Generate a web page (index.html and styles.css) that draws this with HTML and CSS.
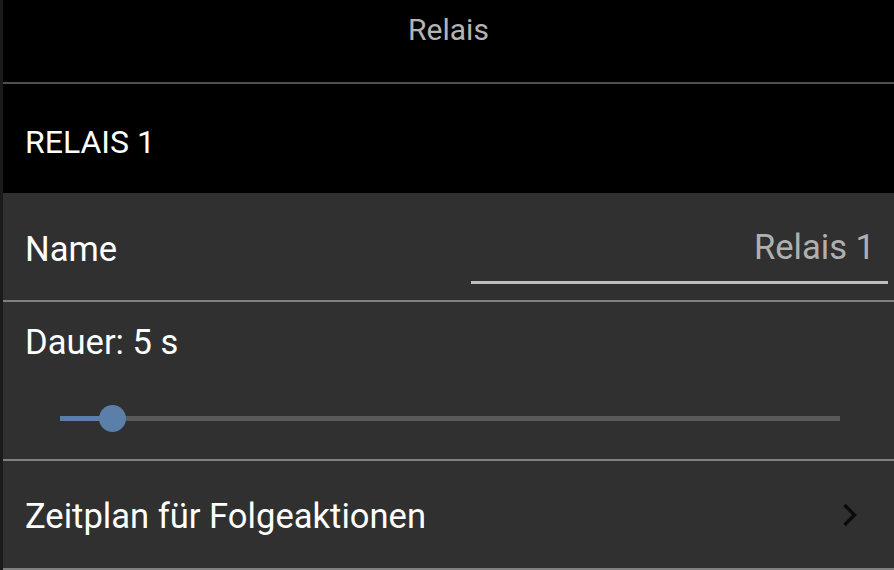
FILE: index.html
```html
<!DOCTYPE html>
<html lang="de">
<head>
  <meta charset="UTF-8" />
  <meta name="viewport" content="width=device-width, initial-scale=1.0"/>
  <title>Relais</title>
  <link rel="stylesheet" href="styles.css">
</head>
<body>
  <div class="app">
    <div class="titlebar">Relais</div>
    <div class="section">RELAIS 1</div>
    <div class="row row-name">
      <span class="label">Name</span>
      <div class="field"><span class="value">Relais 1</span></div>
    </div>
    <div class="row row-slider">
      <span class="label">Dauer: 5 s</span>
      <div class="slider">
        <div class="track">
          <div class="fill" style="width: 6.7%"></div>
          <div class="thumb"></div>
        </div>
      </div>
    </div>
    <div class="row row-link">
      <span class="label">Zeitplan für Folgeaktionen</span>
      <svg class="chevron" width="16" height="24" viewBox="0 0 16 24">
        <polyline points="2.5,2 12.5,12 2.5,22" fill="none" stroke="#0b0b0b" stroke-width="3.4"/>
      </svg>
    </div>
  </div>
</body>
</html>
```

FILE: styles.css
```css
body { margin: 0; background: #303030; font-family: Roboto, "Liberation Sans", sans-serif; }
.app { border-left: 3px solid #1b1b1b; min-height: 570px; box-sizing: border-box; }
.titlebar { background: #000; color: #b4b4b4; height: 82px; text-align: center; font-size: 30px; line-height: 60px; border-bottom: 2px solid #505050; }
.section { background: #000; color: #fff; height: 109px; display: flex; align-items: center; padding-left: 22px; font-size: 32px; padding-top: 6px; box-sizing: border-box; }
.row { display: flex; color: #fff; font-size: 34.6px; border-bottom: 2px solid #808080; padding-left: 22px; box-sizing: border-box; }
.row-name { height: 109px; align-items: center; justify-content: space-between; }
.row-name .label { padding-top: 4px; }
.field { width: 417px; margin-right: 6px; align-self: flex-end; height: 84px; border-bottom: 3px solid #bdbdbd; margin-bottom: 16px; box-sizing: border-box; display: flex; align-items: center; justify-content: flex-end; padding-right: 13px; }
.value { color: #b0b0b0; font-size: 34.6px; padding-top: 12px; }
.row-slider { height: 159px; flex-direction: column; padding-top: 20px; }
.slider { margin: 54px 0 0 35px; width: 780px; }
.track { position: relative; height: 5px; background: #5a5a5a; }
.fill { height: 100%; background: #5b7fa8; }
.thumb { position: absolute; left: 6.7%; top: 50%; width: 27px; height: 27px; margin: -13.5px 0 0 -13.5px; border-radius: 50%; background: #5b7fa8; }
.row-link { height: 109px; align-items: center; justify-content: space-between; padding-right: 36px; }
.row-link .label { padding-top: 2px; }
.chevron { display: block; }
```
